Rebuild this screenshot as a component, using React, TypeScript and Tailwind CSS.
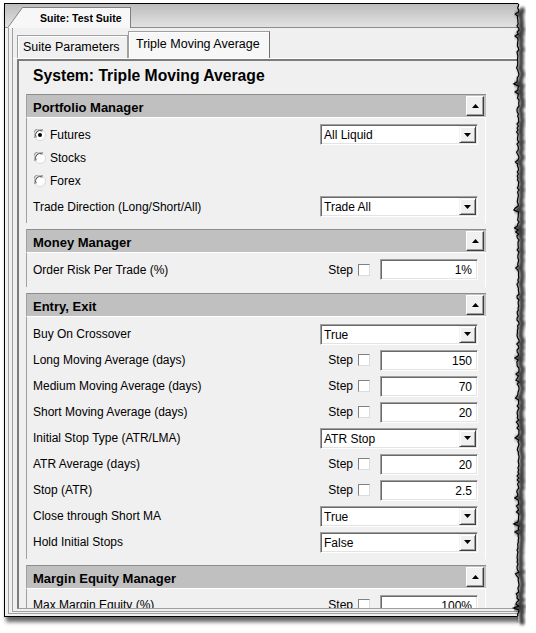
import React from "react";

function Tri({ up }: { up?: boolean }) {
  return (
    <svg width="7" height="4" viewBox="0 0 7 4">
      <path d={up ? "M3.5 0L7 4H0Z" : "M0 0H7L3.5 4Z"} fill="#000" />
    </svg>
  );
}

function UpBtn() {
  return (
    <div className="w-[18px] h-[20px] mr-[2px] bg-[#f0f0f0] border border-t-white border-l-white border-r-[#404040] border-b-[#404040] shadow-[inset_-1px_-1px_0_#a0a0a0] flex items-center justify-center">
      <Tri up />
    </div>
  );
}

function Dropdown({ value }: { value: string }) {
  return (
    <div className="w-[158px] h-[21px] flex bg-white border border-t-[#a0a0a0] border-l-[#a0a0a0] border-r-white border-b-white shadow-[inset_1px_1px_0_#696969,inset_-1px_-1px_0_#e3e3e3]">
      <div className="flex-1 flex items-center pl-[3px] pt-[1px] text-[12px] leading-none">{value}</div>
      <div className="w-[17px] h-[17px] mt-[1px] mr-[1px] bg-[#f0f0f0] border border-t-[#f0f0f0] border-l-[#f0f0f0] border-r-[#404040] border-b-[#404040] shadow-[inset_1px_1px_0_#fff,inset_-1px_-1px_0_#a0a0a0] flex items-center justify-center">
        <Tri />
      </div>
    </div>
  );
}

function Input({ value }: { value: string }) {
  return (
    <div className="ml-[10px] w-[98px] h-[21px] flex items-center justify-end pr-[5px] pt-[1px] bg-white border border-t-[#a0a0a0] border-l-[#a0a0a0] border-r-white border-b-white shadow-[inset_1px_1px_0_#696969,inset_-1px_-1px_0_#e3e3e3] text-[12px] leading-none">
      {value}
    </div>
  );
}

function Check() {
  return (
    <div className="ml-[5px] w-[12px] h-[12px] bg-white border border-t-[#808080] border-l-[#808080] border-r-[#dcdcdc] border-b-[#dcdcdc]" />
  );
}

function Radio({ checked }: { checked?: boolean }) {
  return (
    <svg width="12" height="12" viewBox="0 0 12 12">
      <circle cx="6" cy="6" r="5.5" fill="#fff" stroke="#d8d8d8" />
      <path d="M1.2 9 A5.5 5.5 0 0 1 9 1.2" fill="none" stroke="#808080" />
      <path d="M2.2 8.3 A4.4 4.4 0 0 1 8.3 2.2" fill="none" stroke="#404040" />
      {checked && <circle cx="6" cy="6" r="2" fill="#000" />}
    </svg>
  );
}

function Label({ children }: { children: React.ReactNode }) {
  return <span className="flex-1 text-[12px] leading-none">{children}</span>;
}

function StepRow({ label, value }: { label: string; value: string }) {
  return (
    <div className="h-[26px] flex items-center pl-[6px] pr-[7px]">
      <Label>{label}</Label>
      <span className="text-[12px] leading-none">Step</span>
      <Check />
      <Input value={value} />
    </div>
  );
}

function DropRow({ label, value }: { label: string; value: string }) {
  return (
    <div className="h-[26px] flex items-center pl-[6px] pr-[7px]">
      <Label>{label}</Label>
      <Dropdown value={value} />
    </div>
  );
}

function Section({ title, children }: { title: string; children: React.ReactNode }) {
  return (
    <div className="w-[460px] ml-[7px] shrink-0">
      <div className="h-[24px] bg-[#c0c0c0] border-t border-l border-t-[#8c8c8c] border-l-[#a0a0a0] border-b border-b-white flex items-center justify-between">
        <span className="pl-[6px] pt-[2px] text-[13px] font-bold leading-none">{title}</span>
        <UpBtn />
      </div>
      <div className="border-l border-l-[#a0a0a0] border-r border-r-white">{children}</div>
    </div>
  );
}

function tornPoints() {
  let s = 4242;
  const rnd = () => {
    s = (s * 9301 + 49297) % 233280;
    return s / 233280;
  };
  const pts: [number, number][] = [];
  for (let y = 0; y <= 633; y += 2) {
    let x = 10 + (rnd() - 0.5) * 2.2;
    if (rnd() > 0.9) x -= 1.5 + rnd() * 2;
    pts.push([x, y]);
  }
  return pts;
}

function TornEdge() {
  const pts = tornPoints();
  const line = pts.map((p, i) => `${i ? "L" : "M"}${p[0].toFixed(1)} ${p[1]}`).join(" ");
  const fill = line + " L30 633 L30 0 Z";
  const inWin = pts.filter((p) => p[1] >= 3 && p[1] <= 617);
  const winLine = inWin.map((p, i) => `${i ? "L" : "M"}${p[0].toFixed(1)} ${p[1]}`).join(" ");
  const shadow = pts
    .filter((p) => p[1] >= 8 && p[1] <= 624)
    .map((p, i) => `${i ? "L" : "M"}${(p[0] + 3.5).toFixed(1)} ${p[1]}`)
    .join(" ");
  return (
    <svg className="absolute left-[508px] top-0" width="28" height="633" viewBox="0 0 28 633">
      <defs>
        <filter id="bl" x="-50%" y="-5%" width="200%" height="110%">
          <feGaussianBlur stdDeviation="1.5" />
        </filter>
      </defs>
      <path d={fill} fill="#fff" />
      <path d={shadow} fill="none" stroke="#3a3a3a" strokeWidth="5" filter="url(#bl)" />
      <path d={winLine} fill="none" stroke="#000" strokeWidth="1.2" />
    </svg>
  );
}

export default function App() {
  return (
    <div className="relative w-[536px] h-[633px] bg-white overflow-hidden font-['Liberation_Sans',Arial,sans-serif] text-black">
      <div className="ml-[4px] mt-[3px] w-[524px] h-[614px] border-t border-b border-l border-black bg-[#f0f0f0] flex flex-col shadow-[2px_5px_4px_rgba(0,0,0,0.6)]">
        {/* title bar */}
        <div className="h-[24px] shrink-0 bg-gradient-to-b from-[#bdbdbd] to-[#e2e2e2] border-b border-b-[#8c8c8c] flex items-end">
          <div className="ml-[2px] -mb-px flex items-end h-[21px]">
            <svg width="16" height="21" viewBox="0 0 16 21">
              <path d="M0 21 L15 1 L16 1 L16 21 Z" fill="#f7f7f7" />
              <path d="M0.5 21 L15.5 0.5 L16 0.5" fill="none" stroke="#808080" />
            </svg>
            <div className="h-[21px] w-[108px] bg-[#f7f7f7] border-t border-r border-[#808080] flex items-center pl-[17px] text-[10.5px] font-bold leading-none">
              Suite: Test Suite
            </div>
          </div>
        </div>
        {/* body */}
        <div className="flex-1 min-h-0 flex flex-col pl-[3px] pb-[2px]">
          <div className="flex-1 min-h-0 flex flex-col border-l border-b border-[#a0a0a0] pl-[3px] pb-[1px]">
            <div className="flex-1 min-h-0 flex flex-col border-l border-b border-[#a0a0a0] pb-[2px]">
              {/* tabs */}
              <div className="h-[30px] shrink-0 flex items-end pl-[4px]">
                <div className="w-[111px] h-[23px] bg-[#f0f0f0] border border-b-0 border-[#a0a0a0] shadow-[inset_1px_1px_0_#fff] flex items-center pl-[5px] pt-[1px] text-[12.5px] leading-none">
                  Suite Parameters
                </div>
                <div className="w-[142px] h-[27px] bg-[#f7f7f7] border border-b-0 border-[#a0a0a0] border-r-[#707070] shadow-[inset_1px_1px_0_#fff] flex items-center pl-[7px] pb-[2px] text-[12.5px] leading-none">
                  Triple Moving Average
                </div>
              </div>
              <div className="h-px shrink-0 bg-white" />
              {/* content box */}
              <div className="flex-1 min-h-0 ml-[4px] border-t-2 border-l-2 border-b border-t-[#7c7c7c] border-l-[#7c7c7c] border-b-[#a0a0a0] overflow-hidden flex flex-col gap-[6px]">
                <div className="h-[27px] shrink-0 flex items-center pl-[14px] pt-[2px] text-[15.7px] font-bold leading-none">
                  System: Triple Moving Average
                </div>
                <Section title="Portfolio Manager">
                  <div className="pt-[5px] pb-[4px]">
                    <div className="h-[23px] flex items-center pl-[7px] pr-[7px]">
                      <Radio checked />
                      <span className="ml-[4px] flex-1 text-[12px] leading-none">Futures</span>
                      <Dropdown value="All Liquid" />
                    </div>
                    <div className="h-[23px] flex items-center pl-[7px]">
                      <Radio />
                      <span className="ml-[4px] text-[12px] leading-none">Stocks</span>
                    </div>
                    <div className="h-[23px] flex items-center pl-[7px]">
                      <Radio />
                      <span className="ml-[4px] text-[12px] leading-none">Forex</span>
                    </div>
                    <div className="mt-[2px] h-[25px] flex items-center pl-[6px] pr-[7px]">
                      <Label>Trade Direction (Long/Short/All)</Label>
                      <Dropdown value="Trade All" />
                    </div>
                  </div>
                </Section>
                <Section title="Money Manager">
                  <div className="pt-[5px] pb-[6px]">
                    <div className="h-[23px] flex items-center pl-[6px] pr-[7px]">
                      <Label>Order Risk Per Trade (%)</Label>
                      <span className="text-[12px] leading-none">Step</span>
                      <Check />
                      <Input value="1%" />
                    </div>
                  </div>
                </Section>
                <Section title="Entry, Exit">
                  <div className="pt-[4px] pb-[4px]">
                    <DropRow label="Buy On Crossover" value="True" />
                    <StepRow label="Long Moving Average (days)" value="150" />
                    <StepRow label="Medium Moving Average (days)" value="70" />
                    <StepRow label="Short Moving Average (days)" value="20" />
                    <DropRow label="Initial Stop Type (ATR/LMA)" value="ATR Stop" />
                    <StepRow label="ATR Average (days)" value="20" />
                    <StepRow label="Stop (ATR)" value="2.5" />
                    <DropRow label="Close through Short MA" value="True" />
                    <DropRow label="Hold Initial Stops" value="False" />
                  </div>
                </Section>
                <Section title="Margin Equity Manager">
                  <div className="pt-[3px]">
                    <StepRow label="Max Margin Equity (%)" value="100%" />
                  </div>
                </Section>
              </div>
            </div>
          </div>
        </div>
      </div>
      <TornEdge />
    </div>
  );
}
